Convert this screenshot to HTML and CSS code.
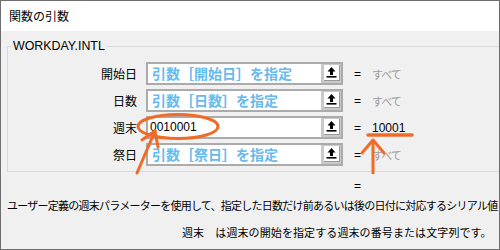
FILE: index.html
```html
<!DOCTYPE html>
<html lang="ja">
<head>
<meta charset="utf-8">
<title>関数の引数</title>
<link rel="stylesheet" href="styles.css">
</head>
<body>
<div class="window">
  <div class="titlebar">関数の引数</div>
  <div class="group">
    <div class="legend">WORKDAY.INTL</div>
    <div class="rows">
      <div class="row">
        <span class="lbl">開始日</span>
        <div class="field"><span class="text ph">引数［開始日］を指定</span><span class="btn"><span class="btn-face"><svg width="15" height="15" viewBox="0 0 15 15"><path d="M7.5 2 L11.5 6.5 L9 6.5 L9 10 L6 10 L6 6.5 L3.5 6.5 Z" fill="#000"/><rect x="2.5" y="11" width="10" height="1.6" fill="#000"/></svg></span></span></div>
        <span class="eq">=</span>
        <span class="val dim">すべて</span>
      </div>
      <div class="row">
        <span class="lbl">日数</span>
        <div class="field"><span class="text ph">引数［日数］を指定</span><span class="btn"><span class="btn-face"><svg width="15" height="15" viewBox="0 0 15 15"><path d="M7.5 2 L11.5 6.5 L9 6.5 L9 10 L6 10 L6 6.5 L3.5 6.5 Z" fill="#000"/><rect x="2.5" y="11" width="10" height="1.6" fill="#000"/></svg></span></span></div>
        <span class="eq">=</span>
        <span class="val dim">すべて</span>
      </div>
      <div class="row">
        <span class="lbl">週末</span>
        <div class="field"><span class="text val-input">0010001</span><span class="btn"><span class="btn-face"><svg width="15" height="15" viewBox="0 0 15 15"><path d="M7.5 2 L11.5 6.5 L9 6.5 L9 10 L6 10 L6 6.5 L3.5 6.5 Z" fill="#000"/><rect x="2.5" y="11" width="10" height="1.6" fill="#000"/></svg></span></span></div>
        <span class="eq">=</span>
        <span class="val num">10001</span>
      </div>
      <div class="row">
        <span class="lbl">祭日</span>
        <div class="field"><span class="text ph">引数［祭日］を指定</span><span class="btn"><span class="btn-face"><svg width="15" height="15" viewBox="0 0 15 15"><path d="M7.5 2 L11.5 6.5 L9 6.5 L9 10 L6 10 L6 6.5 L3.5 6.5 Z" fill="#000"/><rect x="2.5" y="11" width="10" height="1.6" fill="#000"/></svg></span></span></div>
        <span class="eq">=</span>
        <span class="val dim">すべて</span>
      </div>
    </div>
  </div>
  <div class="result"><span class="eq">=</span></div>
  <div class="desc1">ユーザー定義の週末パラメーターを使用して、指定した日数だけ前あるいは後の日付に対応するシリアル値</div>
  <div class="desc2"><span class="arg">週末</span>　は週末の開始を指定する週末の番号または文字列です。</div>

  <svg class="marks" width="500" height="250" viewBox="0 0 500 250">
    <ellipse cx="178" cy="126.5" rx="40" ry="12" fill="none" stroke="#f06a28" stroke-width="3"/>
    <path d="M137 173 L155 131" fill="none" stroke="#f06a28" stroke-width="3" stroke-linecap="round"/>
    <path d="M142 140 L155 131 L158 147" fill="none" stroke="#f06a28" stroke-width="3" stroke-linecap="round" stroke-linejoin="round"/>
    <path d="M368 135 L412 135" fill="none" stroke="#f06a28" stroke-width="3.5" stroke-linecap="round"/>
    <path d="M373 174 L373 140" fill="none" stroke="#f06a28" stroke-width="3"/>
    <path d="M362 153 L373 140 L384 153" fill="none" stroke="#f06a28" stroke-width="3" stroke-linecap="round" stroke-linejoin="round"/>
  </svg>
</div>
</body>
</html>
```
FILE: styles.css
```css
html, body {
  margin: 0;
  padding: 0;
  background: #ffffff;
}

.window {
  position: relative;
  width: 500px;
  height: 250px;
  box-sizing: border-box;
  border: 1px solid #6e6e6e;
  background: #f0f0f0;
  overflow: hidden;
  font-family: "Liberation Sans", "Noto Sans CJK JP", sans-serif;
  font-size: 12px;
  line-height: 16px;
  color: #000;
}

.titlebar {
  height: 30px;
  line-height: 29px;
  background: #ffffff;
  padding-left: 8px;
  font-family: "Noto Sans CJK JP", sans-serif;
  font-size: 12px;
}

.group {
  margin-top: 15px;
  margin-left: 6px;
  border-top: 1px solid #d9d9d9;
  border-left: 1px solid #d9d9d9;
  border-bottom: 1px solid #d9d9d9;
  padding-bottom: 5px;
}

.legend {
  display: block;
  width: max-content;
  margin-top: -9px;
  margin-left: 3px;
  padding: 0 2px;
  line-height: 16px;
  height: 16px;
  background: #f0f0f0;
  font-size: 12.4px;
}

.rows {
  margin-top: 8px;
  display: flex;
  flex-direction: column;
  gap: 4px;
}

.row {
  display: flex;
  align-items: center;
  height: 23px;
}

.lbl {
  width: 129px;
  margin-right: 9px;
  text-align: right;
  font-family: "Noto Sans CJK JP", sans-serif;
  font-size: 12px;
  line-height: 16px;
}

.field {
  width: 197px;
  height: 23px;
  box-sizing: border-box;
  border: 2px solid #ababab;
  background: #ffffff;
  display: flex;
  align-items: stretch;
}

.text {
  flex: 1;
  line-height: 19px;
  padding-left: 2px;
  white-space: nowrap;
  overflow: hidden;
}

.ph {
  padding-left: 4px;
  font-family: "Noto Sans CJK JP", sans-serif;
  font-size: 14px;
  font-weight: 700;
  color: #66baee;
}

.val-input {
  font-size: 12px;
}

.btn {
  width: 20px;
  background: #c9c9c9;
  box-sizing: border-box;
  padding: 1px 1px 2px 3px;
  display: flex;
}

.btn-face {
  width: 16px;
  height: 16px;
  box-sizing: border-box;
  background: #ffffff;
  border-right: 1px solid #9a9a9a;
  border-bottom: 1px solid #9a9a9a;
  display: flex;
  align-items: center;
  justify-content: center;
}

.eq {
  margin-left: 11px;
  width: 7px;
  line-height: 16px;
}

.val {
  margin-left: 11px;
  line-height: 16px;
}

.dim {
  font-family: "Noto Sans CJK JP", sans-serif;
  font-size: 11px;
  letter-spacing: -1px;
  color: #9c9c9c;
}

.num {
  font-size: 12px;
}

.result {
  margin-top: 6px;
  height: 16px;
  padding-left: 342px;
}

.result .eq {
  display: inline-block;
}

.desc1 {
  margin-left: 6px;
  line-height: 22px;
  white-space: nowrap;
  font-family: "Noto Sans CJK JP", sans-serif;
  font-size: 11px;
  letter-spacing: -0.75px;
}

.desc2 {
  margin-top: 5px;
  margin-left: 181px;
  line-height: 22px;
  white-space: nowrap;
  font-family: "Noto Sans CJK JP", sans-serif;
  font-size: 11px;
  letter-spacing: 0.1px;
}

.marks {
  position: absolute;
  left: -1px;
  top: -1px;
  pointer-events: none;
}
```
